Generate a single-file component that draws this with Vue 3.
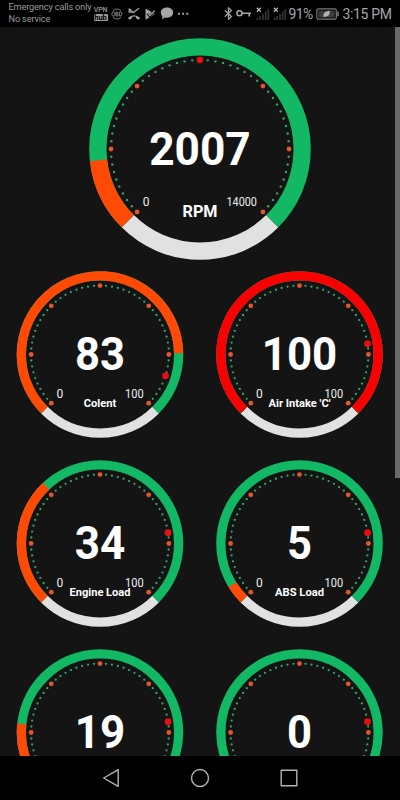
<script setup>
const point = (c, r, deg) => {
  const a = (deg * Math.PI) / 180
  return [c + r * Math.sin(a), c - r * Math.cos(a)]
}

const arc = (c, r, from, to) => {
  const [x1, y1] = point(c, r, from)
  const [x2, y2] = point(c, r, to)
  return `M${x1.toFixed(2)} ${y1.toFixed(2)}A${r} ${r} 0 ${to - from > 180 ? 1 : 0} 1 ${x2.toFixed(2)} ${y2.toFixed(2)}`
}

const large = {
  size: 222, boxW: 222, width: 17.3, dots: 89, tick: 1.2, major: 2.4, mark: 3.3,
  valueY: 126.8, minX: 57, minY: 168.2, maxX: 152.7, maxW: 30.5, labelY: 179
}
const small = {
  size: 167, boxW: 168, width: 9.3, dots: 68.9, tick: 1.15, major: 2.4, mark: 3.4,
  valueY: 98.8, minX: 43.4, minY: 127.2, maxX: 117.8, maxW: 18.6, labelY: 136.2
}

const build = (g, dim) => {
  const c = dim.size / 2
  const r = c - 0.2 - dim.width / 2
  const split = -135 + (g.value / g.max) * 270
  const ticks = []
  for (let d = -135; d <= 135; d += 5) {
    const [x, y] = point(c, dim.dots, d)
    ticks.push({ x, y, major: d % 45 === 0 })
  }
  const [mx, my] = point(c, dim.dots, -135 + g.mark * 270)
  return {
    ...g, dim, c, ticks, mx, my,
    rest: arc(c, r, 135, 225),
    track: arc(c, r, -135, 135),
    fill: g.value > 0 ? arc(c, r, -135, split) : ''
  }
}

const gauges = [
  build({ id: 'rpm', label: 'RPM', labelW: 35, value: 2007, valueW: 101.5, max: 14000, mark: 0.5, big: true }, large),
  build({ id: 'colent', label: 'Colent', labelW: 32.5, value: 83, valueW: 50, max: 100, mark: 0.9, left: true }, small),
  build({ id: 'air', label: "Air Intake 'C'", labelW: 62, value: 100, valueW: 75.5, max: 100, mark: 0.8, alert: true }, small),
  build({ id: 'engine', label: 'Engine Load', labelW: 61, value: 34, valueW: 50.5, max: 100, mark: 0.8, left: true }, small),
  build({ id: 'abs', label: 'ABS Load', labelW: 49, value: 5, valueW: 25, max: 100, mark: 0.8 }, small),
  build({ id: 'g19', value: 19, valueW: 50.5, max: 100, mark: 0.8, left: true }, small),
  build({ id: 'g0', value: 0, valueW: 25, max: 100, mark: 0.8 }, small)
]
</script>

<template>
  <div class="phone">
    <header class="status">
      <div class="carrier">
        <span>Emergency calls only</span>
        <span>No service</span>
      </div>
      <div class="notices">
        <span class="vpn"><b>VPN</b><i>hub</i></span>
        <svg width="12" height="12" viewBox="0 0 12 12">
          <g fill="none" stroke="#8b8b8b" stroke-width=".9">
            <path d="M2 3a5 5 0 0 1 8 0M2 9a5 5 0 0 0 8 0" />
            <rect x="1" y="3.9" width="2.8" height="4.2" rx="1.3" />
            <path d="M5 4v4h1.2q1-.2 1-1T6.4 6q.7-.2.6-1T6 4zM5 6h1.4M8.3 4v4h.7q2-.3 2-2t-2-2z" />
          </g>
        </svg>
        <svg width="14" height="12" viewBox="0 0 14 12">
          <path d="M2.200.6v3.600H6M2.500.9l3.800 3.700L12 .3" fill="none" stroke="#a6a6a6" stroke-width="1.300" />
          <path d="M.8 10Q7 4.700 13.200 10l-1.800 1.700-2.500-1.700V8.700q-1.900-.5-3.800 0V10l-2.500 1.700z" fill="#a6a6a6" />
        </svg>
        <svg width="12" height="12" viewBox="0 0 12 12">
          <path d="M1.500.5 11 6 1.500 11.800z" fill="#a6a6a6" />
          <path d="M3.500 5.500 5.700 8 11 2.700" fill="none" stroke="#000" stroke-width="2.400" />
          <path d="M3.700 5.400 5.800 7.600 10.600 2.800" fill="none" stroke="#a6a6a6" stroke-width="1.300" />
        </svg>
        <svg width="14" height="13" viewBox="0 0 14 13">
          <path d="M7 .5c3.600 0 6.200 2.200 6.200 5.100s-2.600 5.100-6.200 5.100c-.8 0-1.600-.1-2.200-.3L2 12.400l.4-3C1.300 8.400.8 7.100.8 5.600.8 2.700 3.400.5 7 .5z" fill="#a6a6a6" />
        </svg>
        <svg width="12" height="12" viewBox="0 0 12 12">
          <path d="M.9 4.700h2v2h-2zM5.100 4.700h2v2h-2zM9.300 4.700h2v2h-2z" fill="#9b9b9b" />
        </svg>
      </div>
      <div class="system">
        <svg width="9" height="13" viewBox="0 0 9 13">
          <path d="M.8 3.300 7.400 9.500 4.500 12.200V.8l2.900 2.700L.8 9.700" fill="none" stroke="#a6a6a6" stroke-width="1.200" />
        </svg>
        <svg class="key" width="16" height="9" viewBox="0 0 16 9">
          <circle cx="3.500" cy="4.300" r="2.500" fill="none" stroke="#a6a6a6" stroke-width="1.600" />
          <path d="M6 4.300h9M13.200 4.300v3.200" fill="none" stroke="#a6a6a6" stroke-width="1.600" />
        </svg>
        <svg v-for="n in 2" :key="n" class="signal" width="14" height="14" viewBox="0 0 14 14">
          <path d="m.8.700 4 4M4.800.700l-4 4" stroke="#b4b4b4" stroke-width="1.300" />
          <path d="M1.500 10.500v2.500M4.300 9v4M7 7v6M9.700 4.500V13M12.300 2v11" stroke="#343434" stroke-width="1.700" />
        </svg>
        <span class="percent">91%</span>
        <svg class="battery" width="24" height="12" viewBox="0 0 24 12">
          <rect x=".8" y=".8" width="19.500" height="10.400" rx="1.500" fill="#0b0b0b" stroke="#777" stroke-width="1.200" />
          <rect x="2.600" y="2.600" width="15.800" height="6.800" fill="#3c3c3c" />
          <path d="M7.500 9.500C7 5 9 3.300 13.800 2.800c0 4.500-2 6.300-5 5.800z" fill="#b5b5b5" />
          <path d="M22 3.700v4.600" stroke="#777" stroke-width="1.700" />
        </svg>
        <span class="clock">3:15 PM</span>
      </div>
    </header>

    <main class="content">
      <section class="dials">
        <svg
          v-for="g in gauges"
          :key="g.id"
          class="gauge"
          :class="{ big: g.big, alert: g.alert }"
          :width="g.dim.boxW"
          :height="g.dim.size"
          :viewBox="`${g.left ? -0.5 : 0} 0 ${g.dim.boxW} ${g.dim.size}`"
        >
          <g fill="none" :stroke-width="g.dim.width">
            <path class="rest" :d="g.rest" />
            <path class="track" :d="g.track" />
            <path v-if="g.fill" class="fill" :d="g.fill" />
          </g>
          <circle
            v-for="(t, i) in g.ticks"
            :key="i"
            :class="t.major ? 'major' : 'tick'"
            :cx="t.x"
            :cy="t.y"
            :r="t.major ? g.dim.major : g.dim.tick"
          />
          <circle class="mark" :cx="g.mx" :cy="g.my" :r="g.dim.mark" />
          <text class="value" :x="g.c" :y="g.dim.valueY" text-anchor="middle" :textLength="g.valueW" lengthAdjust="spacingAndGlyphs">{{ g.value }}</text>
          <template v-if="g.label">
            <text class="limit" :x="g.dim.minX" :y="g.dim.minY" text-anchor="middle">0</text>
            <text class="limit" :x="g.dim.maxX" :y="g.dim.minY" text-anchor="middle" :textLength="g.dim.maxW" lengthAdjust="spacingAndGlyphs">{{ g.max }}</text>
            <text class="label" :x="g.c" :y="g.dim.labelY" text-anchor="middle" :textLength="g.labelW" lengthAdjust="spacingAndGlyphs">{{ g.label }}</text>
          </template>
        </svg>
      </section>
      <div class="scrollbar"></div>
    </main>

    <nav class="nav">
      <svg width="18" height="20" viewBox="0 0 18 20">
        <path d="M16.200 1.700v16.600L1.700 10z" />
      </svg>
      <svg width="20" height="20" viewBox="0 0 20 20">
        <circle cx="10" cy="10" r="8.500" />
      </svg>
      <svg width="18" height="18" viewBox="0 0 18 18">
        <rect x="1.200" y="1.200" width="15.600" height="15.600" />
      </svg>
    </nav>
  </div>
</template>

<style>
body {
  background: #000;
}
</style>

<style scoped>
.phone {
  width: 400px;
  height: 800px;
  display: flex;
  flex-direction: column;
  overflow: hidden;
  background: #000;
  font-family: Roboto, "Liberation Sans", sans-serif;
}
.phone svg {
  display: block;
  flex: none;
}
.status {
  height: 27px;
  flex: none;
  display: flex;
  box-sizing: border-box;
  padding-left: 8.500px;
  color: #9a9a9a;
}
.carrier {
  width: 85px;
  flex: none;
  display: flex;
  flex-direction: column;
  padding-top: 1px;
  box-sizing: border-box;
  font-size: 9.200px;
  letter-spacing: -0.150px;
  line-height: 12.300px;
  white-space: nowrap;
}
.notices {
  display: flex;
  align-items: center;
  gap: 3.500px;
  width: 130px;
  flex: none;
}
.vpn {
  width: 14px;
  display: flex;
  flex-direction: column;
  text-align: center;
  line-height: 7px;
}
.vpn b {
  font-weight: 500;
  font-size: 7px;
  letter-spacing: -0.200px;
}
.vpn i {
  font-style: normal;
  font-size: 7.500px;
  line-height: 7px;
  font-weight: 700;
  color: #000;
  background: #9b9b9b;
  border-radius: 1px;
}
.system {
  display: flex;
  align-items: center;
  color: #a6a6a6;
  font-size: 14px;
  line-height: 20px;
  white-space: nowrap;
}
.key {
  margin-left: 3px;
}
.signal {
  margin-left: 4px;
}
.signal + .signal {
  margin-left: 3px;
}
.percent {
  width: 24px;
  flex: none;
  margin-left: 2px;
  letter-spacing: -0.650px;
}
.battery {
  margin-left: 3px;
}
.clock {
  margin-left: 3px;
  letter-spacing: -0.350px;
}
.content {
  height: 729px;
  flex: none;
  display: flex;
  overflow: hidden;
  background: #141414;
}
.dials {
  width: 395px;
  flex: none;
  box-sizing: border-box;
  padding: 11px 11px 0 16px;
  display: grid;
  grid-template-columns: 168px 168px;
  grid-template-rows: 222px;
  grid-auto-rows: 167px;
  column-gap: 32px;
  row-gap: 22px;
  align-content: start;
}
.big {
  grid-column: 1 / -1;
  justify-self: center;
  margin-bottom: -11px;
}
.gauge:not(.big) {
  margin-top: -11px;
}
.rest {
  stroke: #e1e1e1;
}
.track {
  stroke: #12b864;
}
.fill {
  stroke: #ff4a05;
}
.alert .fill {
  stroke: #fb0003;
}
.tick {
  fill: #35a364;
}
.major {
  fill: #e2562c;
}
.mark {
  fill: #e60f12;
}
.value {
  fill: #fff;
  font-size: 45.500px;
  font-weight: 700;
}
.limit {
  fill: #eee;
  font-size: 12px;
}
.label {
  fill: #fff;
  font-size: 11.200px;
  font-weight: 700;
}
.big .label {
  font-size: 16.500px;
}
.scrollbar {
  width: 5px;
  height: 451px;
  background: #6c6969;
}
.nav {
  height: 44px;
  flex: none;
  display: flex;
  align-items: center;
  justify-content: center;
  gap: 70px;
}
.nav svg {
  fill: none;
  stroke: #b4b4b4;
  stroke-width: 1.400;
  stroke-linejoin: round;
}
</style>
